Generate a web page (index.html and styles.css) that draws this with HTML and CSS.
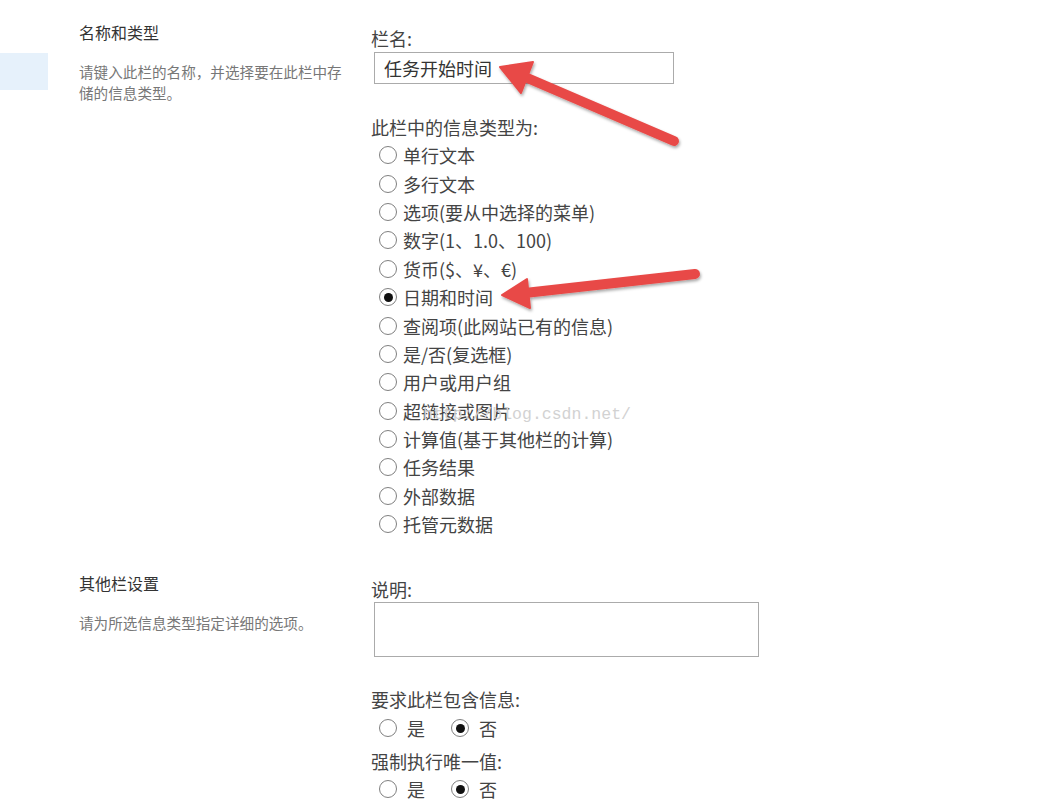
FILE: index.html
```html
<!DOCTYPE html>
<html>
<head>
    <title>栏设置</title>
    <link rel="stylesheet" href="styles.css">
</head>
<body>
    <div class="page">
        <div class="nav">
            <div class="nav-item"></div>
        </div>
        <div class="main">
            <div class="section">
                <div class="section-info">
                    <h3>名称和类型</h3>
                    <p>请键入此栏的名称，并选择要在此栏中存储的信息类型。</p>
                </div>
                <div class="section-fields">
                    <label class="field-label">栏名:</label>
                    <div class="text-input">任务开始时间</div>
                    <label class="field-label type-label">此栏中的信息类型为:</label>
                    <ul class="radio-list">
                        <li><span class="radio"></span>单行文本</li>
                        <li><span class="radio"></span>多行文本</li>
                        <li><span class="radio"></span>选项(要从中选择的菜单)</li>
                        <li><span class="radio"></span>数字(1、1.0、100)</li>
                        <li><span class="radio"></span>货币($、¥、€)</li>
                        <li><span class="radio checked"></span>日期和时间</li>
                        <li><span class="radio"></span>查阅项(此网站已有的信息)</li>
                        <li><span class="radio"></span>是/否(复选框)</li>
                        <li><span class="radio"></span>用户或用户组</li>
                        <li><span class="radio"></span>超链接或图片</li>
                        <li><span class="radio"></span>计算值(基于其他栏的计算)</li>
                        <li><span class="radio"></span>任务结果</li>
                        <li><span class="radio"></span>外部数据</li>
                        <li><span class="radio"></span>托管元数据</li>
                    </ul>
                </div>
            </div>

            <div class="section second">
                <div class="section-info">
                    <h3>其他栏设置</h3>
                    <p>请为所选信息类型指定详细的选项。</p>
                </div>
                <div class="section-fields">
                    <label class="field-label">说明:</label>
                    <div class="text-area"></div>
                    <label class="field-label required-label">要求此栏包含信息:</label>
                    <div class="radio-row">
                        <span class="radio-opt"><span class="radio"></span>是</span>
                        <span class="radio-opt"><span class="radio checked"></span>否</span>
                    </div>
                    <label class="field-label unique-label">强制执行唯一值:</label>
                    <div class="radio-row">
                        <span class="radio-opt"><span class="radio"></span>是</span>
                        <span class="radio-opt"><span class="radio checked"></span>否</span>
                    </div>
                </div>
            </div>
        </div>
    </div>

    <div class="watermark">http://blog.csdn.net/</div>

    <svg class="arrows" width="1041" height="808" viewBox="0 0 1041 808">
        <defs>
            <filter id="shadow" x="-20%" y="-20%" width="140%" height="140%">
                <feDropShadow dx="1" dy="2" stdDeviation="1.6" flood-color="#000" flood-opacity="0.35"/>
            </filter>
        </defs>
        <g fill="#e84a47" stroke="#e84a47" filter="url(#shadow)">
            <line x1="674" y1="141" x2="525" y2="77" stroke-width="10" stroke-linecap="round"/>
            <polygon points="500,67 533,62 521,93" stroke-width="2" stroke-linejoin="round"/>
            <line x1="695" y1="274" x2="525" y2="293" stroke-width="10" stroke-linecap="round"/>
            <polygon points="502,295 527,279 530,308" stroke-width="2" stroke-linejoin="round"/>
        </g>
    </svg>
</body>
</html>
```

FILE: styles.css
```css
body { margin: 0; background: #fff; font-family: "Noto Sans CJK SC", "Noto Sans", sans-serif; color: #444; }
.page { display: flex; width: 1041px; min-height: 808px; }
.nav { width: 48px; padding-top: 53px; }
.nav-item { height: 37px; background: #e6f1fb; }
.main { margin-left: 31px; flex: 1; }

.section { display: flex; padding-top: 21px; }
.section.second { padding-top: 34px; }
.section-info { width: 292px; }
.section-info h3 { margin: 0; font-size: 16px; line-height: 22px; font-weight: normal; color: #333; }
.section-info p { margin: 18px 0 0 0; width: 272px; font-size: 14.6px; line-height: 21px; color: #777; }
.section-fields { padding-top: 5px; font-size: 18px; }

.field-label { display: block; line-height: 24px; color: #444; }
.text-input { box-sizing: border-box; width: 300px; height: 32px; margin: 2px 0 0 3px; padding: 0 9px; border: 1px solid #ababab; line-height: 30px; color: #333; }
.type-label { margin-top: 31px; }
.text-area { box-sizing: border-box; width: 385px; height: 55px; margin: 1px 0 0 3px; border: 1px solid #ababab; }
.required-label { margin-top: 30px; }
.unique-label { margin-top: 7px; }

.radio-list { list-style: none; margin: 2px 0 0 0; padding: 0 0 0 8px; }
.radio-list li { display: flex; align-items: center; height: 28.4px; color: #444; }
.radio { box-sizing: border-box; display: inline-flex; align-items: center; justify-content: center; flex: none; width: 18px; height: 18px; margin-right: 6px; border: 1.3px solid #808080; border-radius: 50%; background: #fff; }
.radio.checked::after { content: ""; width: 9px; height: 9px; border-radius: 50%; background: #111; }

.radio-row { display: flex; align-items: center; height: 28px; margin-top: 3px; padding-left: 8px; }
.radio-row + .unique-label + .radio-row { margin-top: 2px; }
.radio-opt { display: inline-flex; align-items: center; margin-right: 26px; }
.radio-opt .radio { margin-right: 10px; }

.watermark { position: absolute; left: 423px; top: 405px; font-family: "Liberation Mono", monospace; font-size: 16.5px; line-height: 20px; color: #d2d2d2; pointer-events: none; }
.arrows { position: absolute; left: 0; top: 0; pointer-events: none; }
```
